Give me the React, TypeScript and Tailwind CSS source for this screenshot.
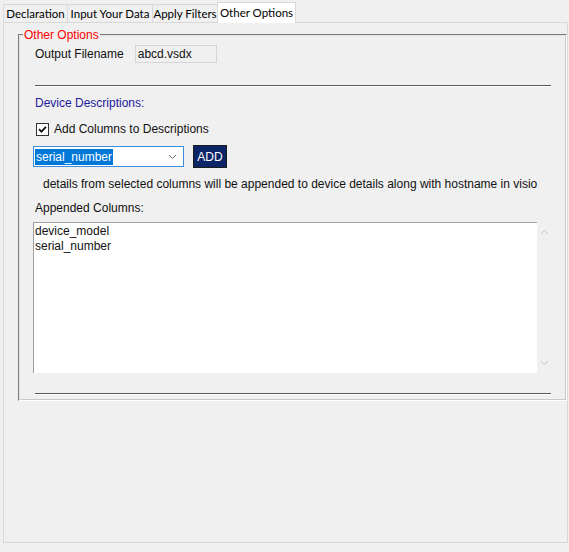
import React from "react";

function Tab({ label, w, selected }: { label: string; w: string; selected?: boolean }) {
  if (selected) {
    return (
      <div
        className={`${w} h-[21px] -mb-px relative z-10 bg-white border-t border-l border-r border-[#d9d9d9] flex items-start justify-center pt-[2px] text-[11.5px] leading-[16px] whitespace-nowrap text-black font-['Lato',sans-serif]`}
      >
        {label}
      </div>
    );
  }
  return (
    <div
      className={`${w} h-[18px] bg-[#f0f0f0] border-t border-l border-[#d9d9d9] flex items-start justify-center pt-[1px] text-[11.5px] leading-[16px] whitespace-nowrap text-black font-['Lato',sans-serif]`}
    >
      {label}
    </div>
  );
}

function Separator() {
  return <div className="ml-[2px] w-[516px] h-[2px] border-t border-[#5a5a5a] border-b border-b-white" />;
}

export default function App() {
  return (
    <div className="w-[569px] h-[552px] bg-[#f0f0f0] pl-[3px] pt-[2px] font-['Liberation_Sans',Arial,sans-serif] text-[12px] text-[#111] overflow-hidden">
      {/* tab strip */}
      <div className="flex items-end h-[20px]">
        <Tab label="Declaration" w="w-[64px]" />
        <Tab label="Input Your Data" w="w-[85px]" />
        <Tab label="Apply Filters" w="w-[65px]" />
        <Tab label="Other Options" w="w-[79px]" selected />
      </div>
      {/* tab panel */}
      <div className="w-[565px] h-[521px] border border-[#d9d9d9] bg-[#f0f0f0] pl-[14px] pt-[11px]">
        {/* groupbox */}
        <div className="relative w-[549px] h-[367px] border-t border-l border-[#7a7a7a] border-r border-b border-r-white border-b-white">
          <div className="h-full border-t border-l border-[#e4e4e4] border-r border-b border-r-[#c8c8c8] border-b-[#c8c8c8] pl-[13px]">
            {/* label over the frame */}
            <div className="absolute left-[4px] top-[-7px] bg-[#f0f0f0] pl-px pr-[1px] text-[#ff0000] leading-[14px]">
              Other Options
            </div>

            {/* Output filename */}
            <div className="mt-[9px] h-[18px] flex items-center">
              <span className="ml-[2px] leading-[14px]">Output Filename</span>
              <div className="ml-[11px] w-[82px] h-[18px] bg-[#f0f0f0] border border-[#d5d5d5] pl-[2px] leading-[16px] text-[#111]">
                abcd.vsdx
              </div>
            </div>

            <div className="mt-[22px]">
              <Separator />
            </div>

            <div className="mt-[9px] ml-[2px] h-[14px] leading-[14px] text-[#1c1c9c]">Device Descriptions:</div>

            {/* checkbox row */}
            <div className="mt-[12px] h-[14px] flex items-center">
              <div className="ml-[3px] w-[13px] h-[13px] border border-[#333] bg-white flex items-center justify-center">
                <svg width="9" height="9" viewBox="0 0 9 9">
                  <path d="M1 4.2 L3.4 6.6 L8 1.8" stroke="#111" strokeWidth="1.8" fill="none" />
                </svg>
              </div>
              <span className="ml-[5px] leading-[14px]">Add Columns to Descriptions</span>
            </div>

            {/* select + add */}
            <div className="mt-[9px] h-[23px] flex items-center">
              <div className="w-[151px] h-[21px] bg-white border border-[#3b8de0] flex items-center pl-px pr-[6px]">
                <span className="bg-[#0078d7] text-white h-[16px] leading-[16px] pl-px pr-[1px]">serial_number</span>
                <div className="flex-1" />
                <svg width="9" height="6" viewBox="0 0 9 6">
                  <path d="M1 1 L4.5 4.5 L8 1" stroke="#6a6a6a" strokeWidth="1" fill="none" />
                </svg>
              </div>
              <div className="ml-[9px] w-[34px] h-[23px] bg-[#0c2567] border border-[#1a1a1a] flex items-center justify-center text-white text-[12px] leading-[14px]">
                ADD
              </div>
            </div>

            <div className="mt-[9px] ml-[10px] h-[14px] leading-[14px]">
              details from selected columns will be appended to device details along with hostname in visio
            </div>

            <div className="mt-[10px] ml-[2px] h-[14px] leading-[14px]">Appended Columns:</div>

            {/* listbox */}
            <div className="mt-[7px] h-[151px] flex">
              <div className="w-[504px] h-full bg-white border-t border-l border-[#a0a0a0] pl-px pt-px">
                <div className="leading-[15px]">device_model</div>
                <div className="leading-[15px]">serial_number</div>
              </div>
              <div className="w-[15px] h-full flex flex-col items-center justify-between py-[7px]">
                <svg width="9" height="6" viewBox="0 0 9 6">
                  <path d="M1 5 L4.5 1.5 L8 5" stroke="#c4c4c4" strokeWidth="1" fill="none" />
                </svg>
                <svg width="9" height="6" viewBox="0 0 9 6">
                  <path d="M1 1 L4.5 4.5 L8 1" stroke="#c4c4c4" strokeWidth="1" fill="none" />
                </svg>
              </div>
            </div>

            <div className="mt-[20px]">
              <Separator />
            </div>
          </div>
        </div>
      </div>
    </div>
  );
}
